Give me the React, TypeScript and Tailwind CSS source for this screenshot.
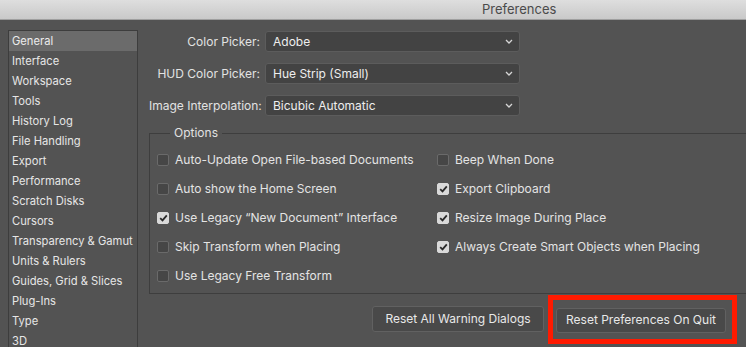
import React from 'react';

const sections = [
  'General',
  'Interface',
  'Workspace',
  'Tools',
  'History Log',
  'File Handling',
  'Export',
  'Performance',
  'Scratch Disks',
  'Cursors',
  'Transparency & Gamut',
  'Units & Rulers',
  'Guides, Grid & Slices',
  'Plug-Ins',
  'Type',
  '3D',
];

const pickers = [
  { label: 'Color Picker:', value: 'Adobe' },
  { label: 'HUD Color Picker:', value: 'Hue Strip (Small)' },
  { label: 'Image Interpolation:', value: 'Bicubic Automatic' },
];

const leftOptions = [
  { label: 'Auto-Update Open File-based Documents', checked: false },
  { label: 'Auto show the Home Screen', checked: false },
  { label: 'Use Legacy \u201cNew Document\u201d Interface', checked: true },
  { label: 'Skip Transform when Placing', checked: false },
  { label: 'Use Legacy Free Transform', checked: false },
];

const rightOptions = [
  { label: 'Beep When Done', checked: false },
  { label: 'Export Clipboard', checked: true },
  { label: 'Resize Image During Place', checked: true },
  { label: 'Always Create Smart Objects when Placing', checked: true },
];

const Checkbox = ({ label, checked }: { label: string; checked: boolean }) => (
  <div className="flex items-center h-[29px] gap-[6px]">
    <div
      className={
        checked
          ? 'w-[12px] h-[12px] rounded-[2px] bg-[#d9d9d9] border border-[#d9d9d9] flex items-center justify-center'
          : 'w-[12px] h-[12px] rounded-[2px] bg-[#464646] border border-[#6a6a6a]'
      }
    >
      {checked && (
        <svg width="9" height="8" viewBox="0 0 9 8">
          <path d="M1.2 4.2 L3.5 6.4 L7.8 1.4" fill="none" stroke="#2a2a2a" strokeWidth="1.8" />
        </svg>
      )}
    </div>
    <span className="text-[12px] text-[#e4e4e4] whitespace-nowrap">{label}</span>
  </div>
);

export default function App() {
  return (
    <div
      className="w-[746px] h-[347px] overflow-hidden bg-[#535353] flex flex-col"
      style={{ fontFamily: '"Inter", "Liberation Sans", sans-serif' }}
    >
      <div className="h-[20px] shrink-0 bg-gradient-to-b from-[#dedede] to-[#c9c9c9] border-b border-[#9f9f9f] flex items-center pl-[482px]">
        <span className="text-[13px] text-[#4b4b4b]">Preferences</span>
      </div>

      <div className="flex flex-1 min-h-0">
        <div className="ml-[8px] mt-[10px] w-[130px] shrink-0 border border-[#3d3d3d] border-b-0">
          {sections.map((s, i) => (
            <div
              key={s}
              className={
                i === 0
                  ? 'h-[20px] flex items-center pl-[3px] text-[11.2px] text-[#ececec] bg-[#6b6b6b]'
                  : 'h-[20px] flex items-center pl-[3px] text-[11.2px] text-[#e6e6e6]'
              }
            >
              {s}
            </div>
          ))}
        </div>

        <div className="w-[608px] shrink-0 pl-[11px] flex flex-col">
          <div className="pt-[11px] flex flex-col gap-[11px]">
            {pickers.map((p) => (
              <div key={p.label} className="flex items-center">
                <div className="w-[116px] text-right text-[12px] text-[#e2e2e2] pr-[5px] whitespace-nowrap">
                  {p.label}
                </div>
                <div className="w-[255px] h-[21px] rounded-[3px] bg-[#434343] border border-[#5c5c5c] flex items-center justify-between pl-[7px] pr-[6px]">
                  <span className="text-[12px] text-[#eeeeee]">{p.value}</span>
                  <svg width="8" height="5" viewBox="0 0 8 5">
                    <path d="M1 1 L4 4 L7 1" fill="none" stroke="#d6d6d6" strokeWidth="1.3" />
                  </svg>
                </div>
              </div>
            ))}
          </div>

          <fieldset className="mt-[8px] w-[640px] shrink-0 border border-[#3e3e3e] pl-[7px] pt-[3px] pb-[3px]">
            <legend className="ml-[13px] px-[4px] text-[12px] text-[#e2e2e2]">Options</legend>
            <div className="flex">
              <div className="w-[280px] flex flex-col">
                {leftOptions.map((o) => (
                  <Checkbox key={o.label} {...o} />
                ))}
              </div>
              <div className="flex flex-col">
                {rightOptions.map((o) => (
                  <Checkbox key={o.label} {...o} />
                ))}
              </div>
            </div>
          </fieldset>

          <div className="mt-[1px] flex items-center justify-end gap-[4px] pr-[9px]">
            <button className="w-[172px] h-[26px] rounded-[3px] bg-[#494949] border border-[#616161] text-[12px] text-[#e8e8e8]">
              Reset All Warning Dialogs
            </button>
            <div className="border-[5px] border-[#ff1a00] pl-[3px] pr-[6px] py-[6px]">
              <button className="w-[170px] h-[25px] rounded-[3px] bg-[#494949] border border-[#616161] text-[12px] text-[#e8e8e8]">
                Reset Preferences On Quit
              </button>
            </div>
          </div>
        </div>
      </div>
    </div>
  );
}
